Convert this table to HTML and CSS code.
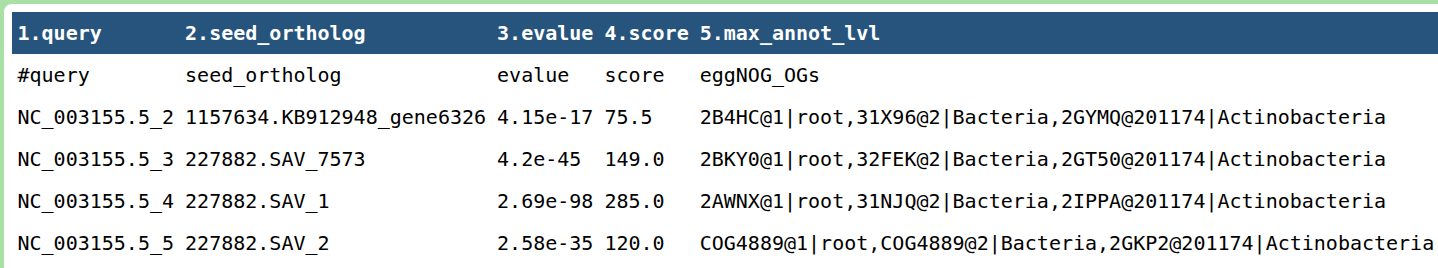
FILE: index.html
```html
<!DOCTYPE html>
<html>
<head>
<meta charset="utf-8">
<link rel="stylesheet" href="styles.css">
</head>
<body>
<div class="panel">
  <table class="grid">
    <thead>
      <tr>
        <th>1.query</th>
        <th>2.seed_ortholog</th>
        <th>3.evalue</th>
        <th>4.score</th>
        <th>5.max_annot_lvl</th>
      </tr>
    </thead>
    <tbody>
      <tr><td>#query</td><td>seed_ortholog</td><td>evalue</td><td>score</td><td>eggNOG_OGs</td></tr>
      <tr><td>NC_003155.5_2</td><td>1157634.KB912948_gene6326</td><td>4.15e-17</td><td>75.5</td><td>2B4HC@1|root,31X96@2|Bacteria,2GYMQ@201174|Actinobacteria</td></tr>
      <tr><td>NC_003155.5_3</td><td>227882.SAV_7573</td><td>4.2e-45</td><td>149.0</td><td>2BKY0@1|root,32FEK@2|Bacteria,2GT50@201174|Actinobacteria</td></tr>
      <tr><td>NC_003155.5_4</td><td>227882.SAV_1</td><td>2.69e-98</td><td>285.0</td><td>2AWNX@1|root,31NJQ@2|Bacteria,2IPPA@201174|Actinobacteria</td></tr>
      <tr><td>NC_003155.5_5</td><td>227882.SAV_2</td><td>2.58e-35</td><td>120.0</td><td>COG4889@1|root,COG4889@2|Bacteria,2GKP2@201174|Actinobacteria</td></tr>
    </tbody>
  </table>
</div>
</body>
</html>
```

FILE: styles.css
```css
html, body {
  margin: 0;
  padding: 0;
  background: #a8e0a6;
  overflow: hidden;
}
body {
  padding: 4px 0 0 4px;
}
.panel {
  display: inline-block;
  background: #ffffff;
  border-radius: 8px 0 0 0;
  padding: 8px 40px 8px 8px;
}
.grid {
  border-collapse: collapse;
  font-family: "DejaVu Sans Mono", "Liberation Mono", monospace;
  font-size: 20px;
  white-space: nowrap;
  color: #000;
}
.grid th, .grid td {
  height: 42px;
  padding: 0 5.5px;
  text-align: left;
  line-height: 42px;
  box-sizing: border-box;
}
.grid th {
  background: #26547c;
  color: #ffffff;
  font-weight: bold;
}
.grid td {
  font-weight: normal;
}
```
